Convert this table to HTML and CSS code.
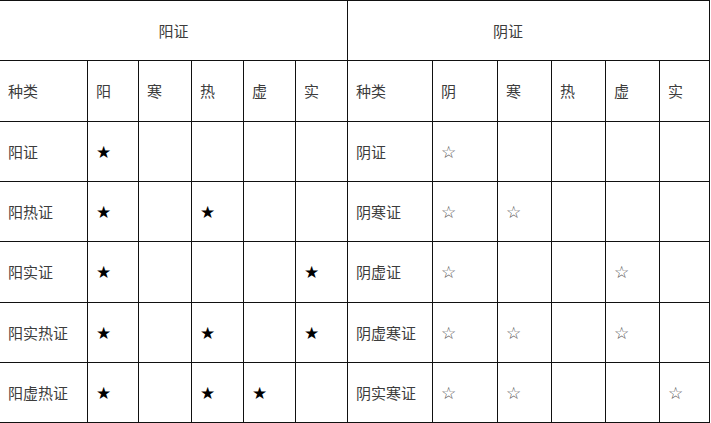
FILE: index.html
```html
<!DOCTYPE html>
<html lang="zh">
<head>
<meta charset="utf-8">
<title>阳证 阴证</title>
<link rel="stylesheet" href="styles.css">
</head>
<body>
<table class="chart">
  <colgroup>
    <col class="c-name-l"><col class="c-a"><col class="c-b"><col class="c-c"><col class="c-c"><col class="c-c">
    <col class="c-name-r"><col class="c-d"><col class="c-e"><col class="c-e"><col class="c-e"><col class="c-f">
  </colgroup>
  <tr class="r-head">
    <td colspan="6" class="group">阳证</td>
    <td colspan="6" class="group group-r">阴证</td>
  </tr>
  <tr class="r-tall">
    <td>种类</td><td>阳</td><td>寒</td><td>热</td><td>虚</td><td>实</td>
    <td>种类</td><td>阴</td><td>寒</td><td>热</td><td>虚</td><td>实</td>
  </tr>
  <tr>
    <td>阳证</td><td class="s">★</td><td></td><td></td><td></td><td></td>
    <td>阴证</td><td class="o">☆</td><td></td><td></td><td></td><td></td>
  </tr>
  <tr>
    <td>阳热证</td><td class="s">★</td><td></td><td class="s">★</td><td></td><td></td>
    <td>阴寒证</td><td class="o">☆</td><td class="o">☆</td><td></td><td></td><td></td>
  </tr>
  <tr class="r-tall">
    <td>阳实证</td><td class="s">★</td><td></td><td></td><td></td><td class="s">★</td>
    <td>阴虚证</td><td class="o">☆</td><td></td><td></td><td class="o">☆</td><td></td>
  </tr>
  <tr>
    <td>阳实热证</td><td class="s">★</td><td></td><td class="s">★</td><td></td><td class="s">★</td>
    <td>阴虚寒证</td><td class="o">☆</td><td class="o">☆</td><td></td><td class="o">☆</td><td></td>
  </tr>
  <tr>
    <td>阳虚热证</td><td class="s">★</td><td></td><td class="s">★</td><td class="s">★</td><td></td>
    <td>阴实寒证</td><td class="o">☆</td><td class="o">☆</td><td></td><td></td><td class="o">☆</td>
  </tr>
</table>
</body>
</html>
```

FILE: styles.css
```css
html, body {
  margin: 0;
  padding: 0;
  background: #ffffff;
}

.chart {
  border-collapse: separate;
  border-spacing: 0;
  table-layout: fixed;
  width: 710px;
  font-family: "Noto Sans CJK SC", "DejaVu Sans", sans-serif;
  font-size: 15px;
  color: #3c3c3c;
}

.c-name-l { width: 88px; }
.c-a { width: 51px; }
.c-b { width: 53px; }
.c-c { width: 52px; }
.c-name-r { width: 85px; }
.c-d { width: 65px; }
.c-e { width: 54px; }
.c-f { width: 50px; }

.chart td {
  box-sizing: border-box;
  height: 60px;
  padding: 0 0 0 8px;
  border-right: 1px solid #111;
  border-bottom: 1px solid #111;
  vertical-align: middle;
  text-align: left;
  white-space: nowrap;
  line-height: 20px;
}

.chart .r-head td {
  border-top: 1px solid #111;
  height: 61px;
  text-align: center;
  padding: 0;
}

.chart .r-tall td {
  height: 61px;
}

.chart .r-head .group-r {
  padding-right: 41px;
}

.chart .s {
  font-family: "DejaVu Sans", sans-serif;
  font-size: 17px;
  color: #000;
}

.chart .o {
  font-family: "DejaVu Sans", sans-serif;
  font-size: 17px;
  color: #555;
}
```
